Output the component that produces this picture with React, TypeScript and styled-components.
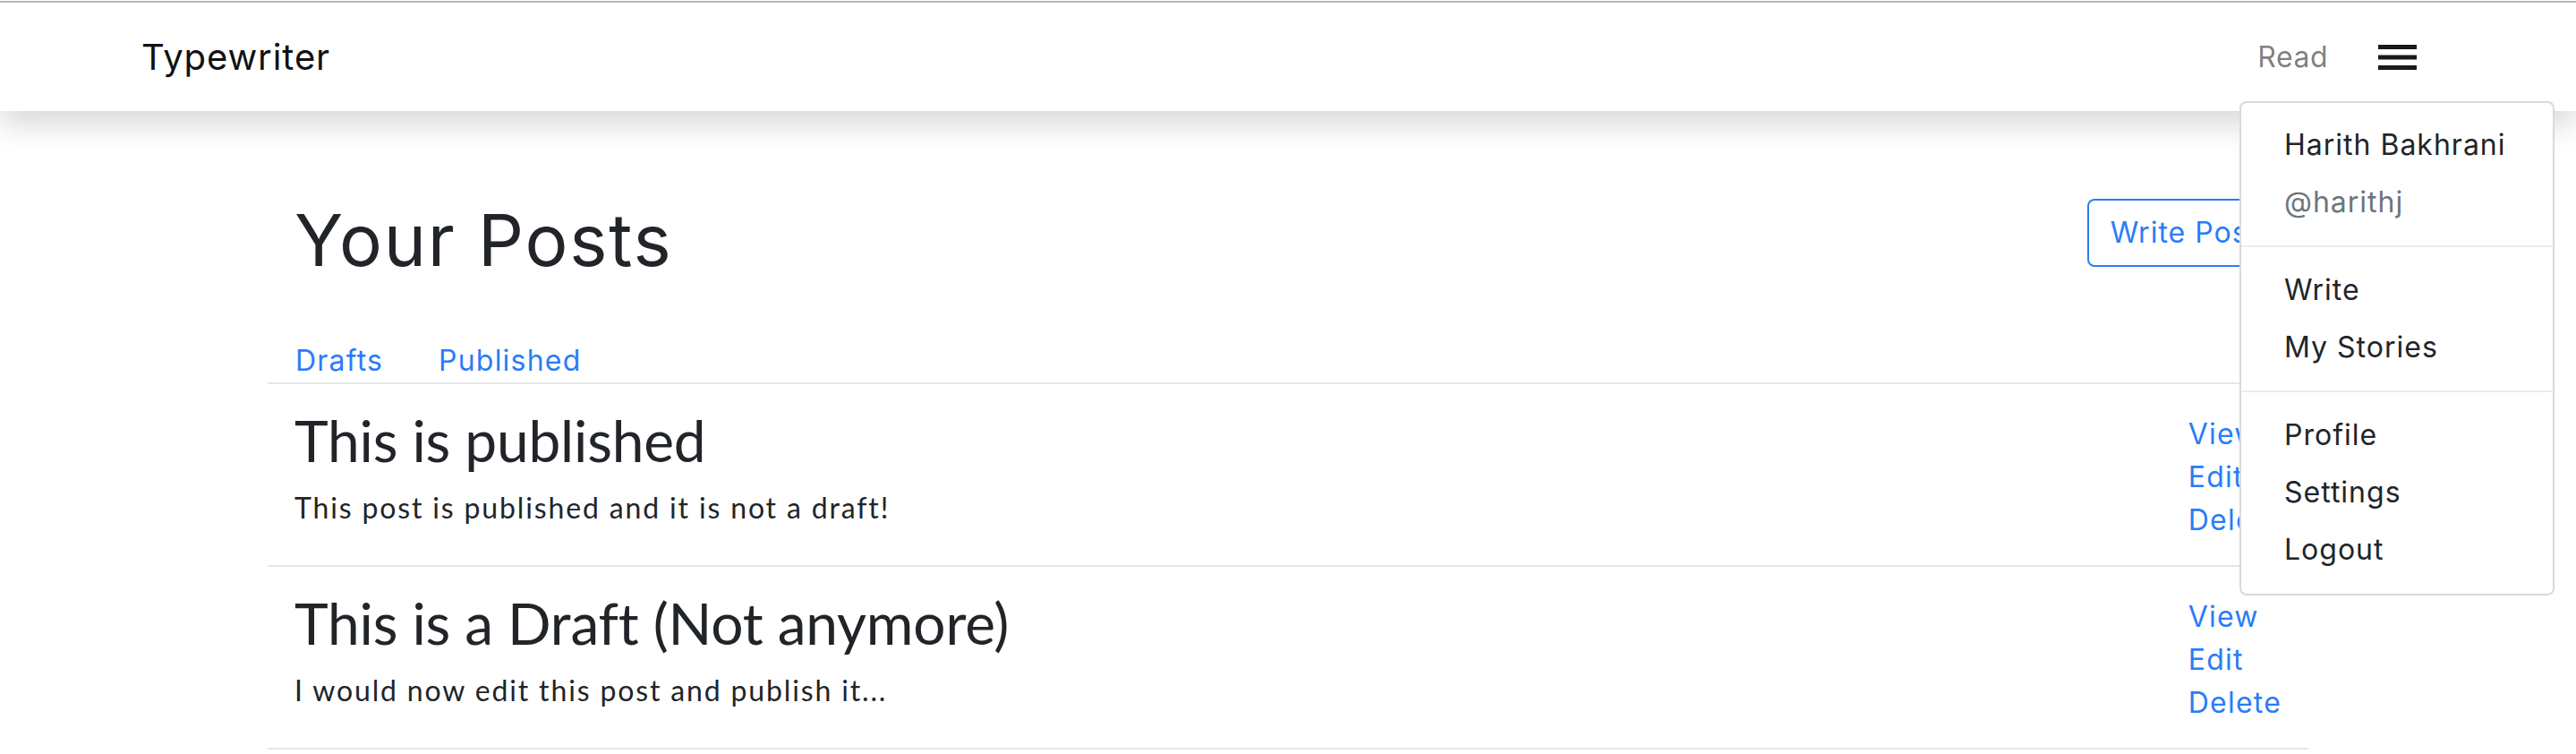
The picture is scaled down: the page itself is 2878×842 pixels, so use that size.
import React from "react";
import styled, { createGlobalStyle } from "styled-components";

const BLUE = "#2a7cf6";

const GlobalStyle = createGlobalStyle`
  html, body {
    margin: 0;
    padding: 0;
    background: #ffffff;
    font-family: Inter, "Open Sans", sans-serif;
    color: #212529;
  }
  * { box-sizing: border-box; }
`;

const Navbar = styled.header`
  position: relative;
  z-index: 2;
  height: 123px;
  margin-top: 1px;
  border-top: 2px solid #b8b8b8;
  background: #ffffff;
  box-shadow: 0 16px 32px rgba(0, 0, 0, 0.15);
  display: flex;
  align-items: center;
  justify-content: space-between;
  padding: 0 178px 0 158px;
`;

const Brand = styled.a`
  font-size: 40px;
  line-height: 60px;
  letter-spacing: 0.9px;
  color: #111111;
  text-decoration: none;
`;

const NavRight = styled.nav`
  display: flex;
  align-items: center;
  gap: 56px;
`;

const NavLink = styled.a`
  font-size: 32px;
  line-height: 48px;
  color: rgba(0, 0, 0, 0.5);
  text-decoration: none;
  letter-spacing: 0.5px;
`;

const Toggler = styled.button`
  display: flex;
  align-items: center;
  border: none;
  background: transparent;
  padding: 0;
  cursor: pointer;
`;

const Dropdown = styled.div`
  position: absolute;
  top: 110px;
  right: 24px;
  width: 352px;
  padding: 15px 0 17px;
  background: #ffffff;
  border: 2px solid rgba(0, 0, 0, 0.15);
  border-radius: 8px;
  z-index: 5;
`;

const DropItem = styled.a<{ $muted?: boolean }>`
  display: block;
  padding: 8px 48px;
  font-size: 32px;
  line-height: 48px;
  letter-spacing: 1px;
  color: ${(p) => (p.$muted ? "#6c757d" : "#212529")};
  text-decoration: none;
  white-space: nowrap;
`;

const DropDivider = styled.div`
  margin: 16px 0;
  border-top: 2px solid #e9ecef;
`;

const Container = styled.main`
  width: 2280px;
  margin: 0 auto;
`;

const Header = styled.div`
  display: flex;
  justify-content: space-between;
  align-items: flex-start;
  padding: 0 30px;
  margin-top: 96px;
`;

const Title = styled.h1`
  margin: 0;
  font-size: 80px;
  font-weight: 400;
  line-height: 96px;
  letter-spacing: 1.8px;
  color: #212529;
`;

const OutlineButton = styled.button`
  margin-top: 2px;
  padding: 12px 24px;
  border: 2px solid ${BLUE};
  border-radius: 8px;
  background: transparent;
  color: ${BLUE};
  font-family: inherit;
  font-size: 32px;
  line-height: 48px;
  letter-spacing: 1px;
`;

const Tabs = styled.nav`
  display: flex;
  margin-top: 63px;
  border-bottom: 2px solid #e6e6e6;
`;

const Tab = styled.a`
  padding: 0 31px;
  font-size: 32px;
  line-height: 48px;
  letter-spacing: 1.2px;
  color: ${BLUE};
  text-decoration: none;
`;

const PostRow = styled.article`
  display: flex;
  justify-content: space-between;
  align-items: flex-start;
  padding: 24px 30px 26px;
  border-bottom: 2px solid #e6e6e6;
`;

const PostText = styled.div`
  display: flex;
  flex-direction: column;
`;

const PostTitle = styled.h2`
  margin: 0;
  font-family: Lato, sans-serif;
  font-size: 64px;
  font-weight: 400;
  line-height: 77px;
  letter-spacing: -0.2px;
  color: #212529;
`;

const PostBody = styled.p`
  margin: 13px 0 14px;
  font-family: Lato, sans-serif;
  font-size: 32px;
  line-height: 48px;
  letter-spacing: 1.85px;
  color: #212529;
`;

const Actions = styled.div`
  display: flex;
  flex-direction: column;
  margin-top: 8px;
`;

const ActionLink = styled.a`
  font-size: 32px;
  line-height: 48px;
  letter-spacing: 1.2px;
  color: ${BLUE};
  text-decoration: none;
`;

const HamburgerIcon = () => (
  <svg width="43" height="28" viewBox="0 0 43 28" aria-hidden="true">
    <rect x="0" y="0" width="43" height="5" fill="#1a1a1a" />
    <rect x="0" y="11.5" width="43" height="5" fill="#1a1a1a" />
    <rect x="0" y="23" width="43" height="5" fill="#1a1a1a" />
  </svg>
);

const posts = [
  { title: "This is published", body: "This post is published and it is not a draft!" },
  { title: "This is a Draft (Not anymore)", body: "I would now edit this post and publish it..." },
];

export default function App() {
  return (
    <>
      <GlobalStyle />
      <Navbar>
        <Brand>Typewriter</Brand>
        <NavRight>
          <NavLink>Read</NavLink>
          <Toggler aria-label="menu">
            <HamburgerIcon />
          </Toggler>
        </NavRight>
        <Dropdown>
          <DropItem>Harith Bakhrani</DropItem>
          <DropItem $muted>@harithj</DropItem>
          <DropDivider />
          <DropItem>Write</DropItem>
          <DropItem>My Stories</DropItem>
          <DropDivider />
          <DropItem>Profile</DropItem>
          <DropItem>Settings</DropItem>
          <DropItem>Logout</DropItem>
        </Dropdown>
      </Navbar>
      <Container>
        <Header>
          <Title>Your Posts</Title>
          <OutlineButton>Write Post</OutlineButton>
        </Header>
        <Tabs>
          <Tab>Drafts</Tab>
          <Tab>Published</Tab>
        </Tabs>
        {posts.map((p) => (
          <PostRow key={p.title}>
            <PostText>
              <PostTitle>{p.title}</PostTitle>
              <PostBody>{p.body}</PostBody>
            </PostText>
            <Actions>
              <ActionLink>View</ActionLink>
              <ActionLink>Edit</ActionLink>
              <ActionLink>Delete</ActionLink>
            </Actions>
          </PostRow>
        ))}
      </Container>
    </>
  );
}
